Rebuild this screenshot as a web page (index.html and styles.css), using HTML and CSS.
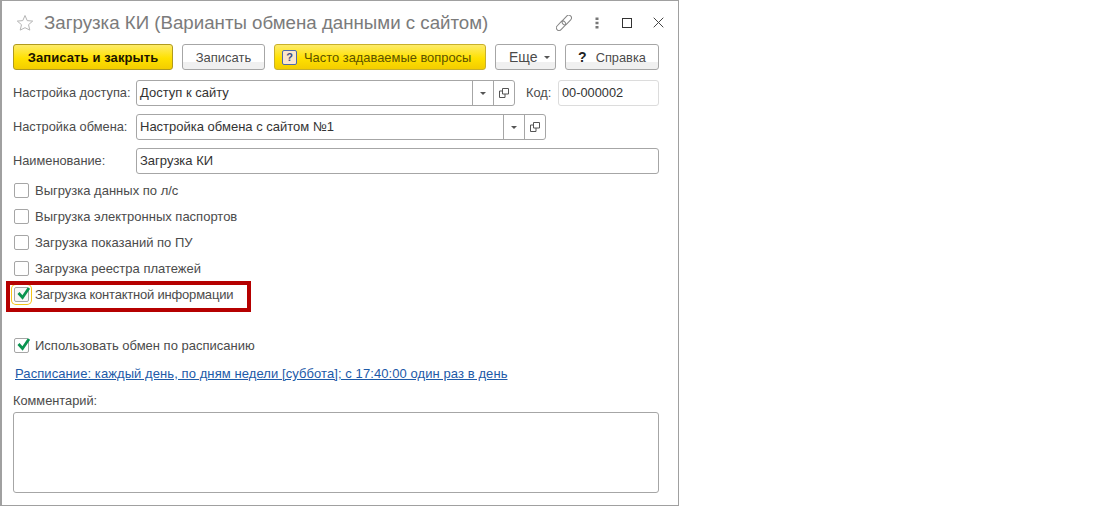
FILE: index.html
```html
<!DOCTYPE html>
<html lang="ru">
<head>
<meta charset="utf-8">
<title>Загрузка КИ</title>
<link rel="stylesheet" href="styles.css">
</head>
<body>
<div class="window">
  <header class="title-bar">
    <svg class="star" width="18" height="18" viewBox="0 0 18 18"><path d="M9 1.500l2.200 5.100 5.500.5-4.200 3.600 1.300 5.400L9 13.700l-4.800 2.400 1.300-5.400L1.300 7.100l5.500-.5z" fill="#fff" stroke="#b5b5b5" stroke-width="1"/></svg>
    <h1 class="title">Загрузка КИ (Варианты обмена данными с сайтом)</h1>
    <div class="win-tools">
      <svg class="tool-link" width="16" height="16" viewBox="0 0 16 16"><g fill="none" stroke="#858585" stroke-width="1"><rect x="-5.500" y="-2.700" width="11" height="5.400" rx="2.700" transform="translate(5 10.800) rotate(-47)"/><rect x="-5.500" y="-2.700" width="11" height="5.400" rx="2.700" transform="translate(10.800 5) rotate(-47)"/></g></svg>
      <svg class="tool-more" width="4" height="12" viewBox="0 0 4 12"><path d="M.5 .5h3v2.500h-3zM.5 4.800h3v2.500h-3zM.5 9h3v2.500h-3z" fill="#777"/></svg>
      <svg class="tool-max" width="10" height="10" viewBox="0 0 10 10"><rect x=".5" y=".5" width="9" height="9" fill="none" stroke="#333"/></svg>
      <svg class="tool-close" width="11" height="11" viewBox="0 0 11 11"><path d="M.7 .7l9.600 9.600M10.300 .7L.7 10.300" stroke="#444" stroke-width="1" fill="none"/></svg>
    </div>
  </header>

  <div class="toolbar">
    <button class="btn btn-primary btn-save-close">Записать и закрыть</button>
    <button class="btn btn-save">Записать</button>
    <button class="btn btn-yellow btn-faq"><span class="faq-icon">?</span>Часто задаваемые вопросы</button>
    <button class="btn btn-more">Еще<span class="caret"></span></button>
    <button class="btn btn-help"><span class="help-q">?</span>Справка</button>
  </div>

  <div class="row row-access">
    <label class="lbl lbl-access">Настройка доступа:</label>
    <div class="field field-access">
      <span class="val">Доступ к сайту</span>
      <span class="cell"><span class="caret"></span></span>
      <span class="cell"><svg width="10" height="10" viewBox="0 0 10 10"><path d="M3.500 .5h6v5.500h-6zM3.500 3H.5v6.500H6V6" fill="none" stroke="#555"/></svg></span>
    </div>
    <label class="lbl lbl-code">Код:</label>
    <div class="field field-code"><span class="val">00-000002</span></div>
  </div>

  <div class="row row-exchange">
    <label class="lbl lbl-access">Настройка обмена:</label>
    <div class="field field-exchange">
      <span class="val">Настройка обмена с сайтом №1</span>
      <span class="cell"><span class="caret"></span></span>
      <span class="cell"><svg width="10" height="10" viewBox="0 0 10 10"><path d="M3.500 .5h6v5.500h-6zM3.500 3H.5v6.500H6V6" fill="none" stroke="#555"/></svg></span>
    </div>
  </div>

  <div class="row row-name">
    <label class="lbl lbl-access">Наименование:</label>
    <div class="field field-name"><span class="val">Загрузка КИ</span></div>
  </div>

  <div class="checks">
    <div class="check"><span class="box"></span>Выгрузка данных по л/с</div>
    <div class="check"><span class="box"></span>Выгрузка электронных паспортов</div>
    <div class="check"><span class="box"></span>Загрузка показаний по ПУ</div>
    <div class="check"><span class="box"></span>Загрузка реестра платежей</div>
    <div class="check check-focus">
      <span class="box box-focus"><svg class="tick" width="17" height="15" viewBox="0 0 17 15"><path d="M3.500 7l4 4.500 6.500-9.500" fill="none" stroke="#0a9450" stroke-width="2.800"/></svg></span>Загрузка контактной информации
      <span class="highlight"></span>
    </div>
  </div>

  <div class="check check-schedule">
    <span class="box"><svg class="tick" width="17" height="15" viewBox="0 0 17 15"><path d="M3.500 7l4 4.500 6.500-9.500" fill="none" stroke="#0a9450" stroke-width="2.800"/></svg></span>Использовать обмен по расписанию
  </div>

  <a class="schedule-link" href="#">Расписание: каждый день, по дням недели [суббота]; с 17:40:00 один раз в день</a>

  <div class="comment-lbl">Комментарий:</div>
  <div class="comment"></div>
</div>
</body>
</html>
```
FILE: styles.css
```css
* { box-sizing: border-box; }
html, body { margin: 0; padding: 0; background: #fff; }
body { font-family: "Liberation Sans", Arial, sans-serif; font-size: 13px; color: #4b4b4b; }
.window {
  width: 679px; height: 506px;
  border: 1px solid #a0a0a0; border-left-width: 2px;
  padding: 0 18px 0 11px;
  position: relative;
}
.title-bar { display: flex; align-items: center; height: 43px; padding: 0 0 0 3px; }
.title { margin: 0 0 0 10px; font-size: 18.7px; font-weight: 400; color: #7b7b7b; white-space: nowrap; flex: 1; }
.win-tools { display: flex; align-items: center; margin-right: -4px; }
.tool-more { margin-left: 23px; }
.tool-max { margin-left: 23px; }
.tool-close { margin-left: 21px; }
.toolbar { display: flex; height: 27px; gap: 9px; }
.btn {
  font: inherit; height: 26px; padding: 0; border-radius: 3px; color: #4b4b4b;
  border: 1px solid #a6a6a6;
  background: linear-gradient(#fff 0, #fff 72%, #f0f0f0 72%, #f0f0f0 100%);
  display: flex; align-items: center; justify-content: center;
}
.btn-primary, .btn-yellow {
  background: linear-gradient(#fdeb6a 0, #ffe100 55%, #f3cd00 100%);
  border-color: #b09a1e;
}
.btn-primary { font-weight: 700; color: #1c1500; letter-spacing: .1px; }
.btn-save-close { width: 160px; }
.btn-save { width: 83px; }
.btn-faq { width: 212px; color: #5c5200; justify-content: flex-start; padding-left: 7px; border-color: #c8b02a; font-size: 12.9px; }
.faq-icon {
  width: 15px; height: 15px; border: 1px solid #4d6aa8; border-radius: 2px; background: #fbe6cc;
  color: #3b4f86; font-size: 11px; font-weight: 700; line-height: 13px; text-align: center; margin-right: 7px;
}
.btn-more { width: 61px; font-size: 14px; justify-content: flex-start; padding-left: 13px; }
.btn-help { width: 94px; font-size: 12.8px; }
.help-q { font-weight: 700; font-size: 14px; color: #222; margin-right: 9px; }
.caret {
  display: inline-block; width: 0; height: 0; vertical-align: middle;
  border-left: 3px solid transparent; border-right: 3px solid transparent; border-top: 3px solid #555;
}
.btn-more .caret { margin-left: 6px; }
.row { display: flex; align-items: center; height: 26px; }
.row-access { margin-top: 9px; }
.row-exchange, .row-name { margin-top: 8px; }
.lbl { display: block; white-space: nowrap; font-size: 12.8px; padding-bottom: 2px; }
.lbl-access { width: 123px; }
.lbl-code { width: 32px; margin-left: 11px; }
.field {
  height: 26px; border: 1px solid #a6a6a6; border-radius: 3px; display: flex; align-items: center; background: #fff;
  color: #333;
}
.val { flex: 1; padding: 0 0 2px 3px; white-space: nowrap; }
.cell {
  width: 21px; height: 24px; border-left: 1px solid #a6a6a6;
  display: flex; align-items: center; justify-content: center;
}
.field-access { width: 379px; }
.field-exchange { width: 410px; }
.field-name { width: 523px; }
.field-code { width: 101px; border-color: #dcdcdc; font-size: 12.8px; }
.checks { display: flex; flex-direction: column; margin-top: 3px; }
.check { display: flex; align-items: center; height: 26px; white-space: nowrap; position: relative; padding-left: 1px; }
.check-focus { letter-spacing: -.2px; }
.box {
  width: 15px; height: 15px; border: 1px solid #a6a6a6; border-radius: 2px; background: #fff;
  margin-right: 6px; position: relative; flex: none;
}
.tick { position: absolute; left: 0; top: -2px; }
.box-focus { background: #f7f7f7; box-shadow: 0 0 0 2px #fff, 0 0 0 3px #f5c518; }
.highlight { position: absolute; left: -7px; top: 0; width: 245px; height: 31px; border: 4px solid #b50000; pointer-events: none; }
.check-schedule { margin-top: 25px; }
.schedule-link { display: block; margin: 3px 0 0 2px; height: 26px; line-height: 26px; color: #1d5aa8; letter-spacing: .08px; }
.comment-lbl { margin-top: 7px; height: 18px; line-height: 14px; font-size: 12.8px; }
.comment { width: 646px; height: 81px; border: 1px solid #a6a6a6; border-radius: 3px; }
```
